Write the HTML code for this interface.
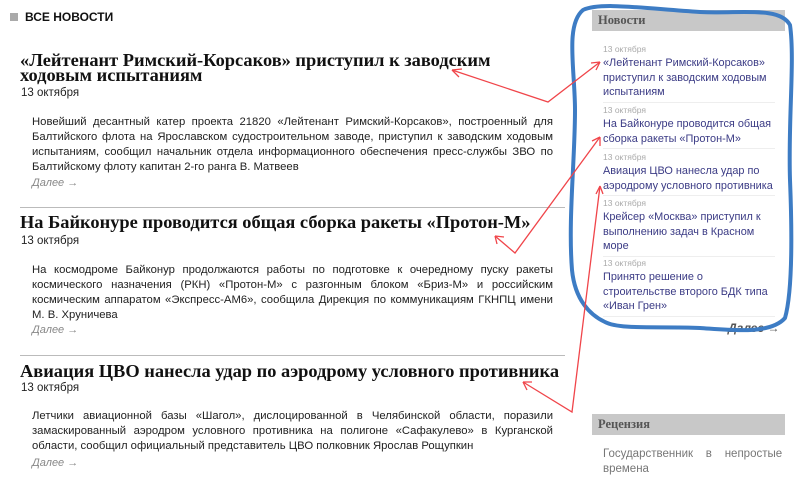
<!DOCTYPE html>
<html><head><meta charset="utf-8"><style>
body{margin:0;width:800px;height:478px;background:#fff;position:relative;overflow:hidden;font-family:"Liberation Sans",Arial,sans-serif}
.a{position:absolute}
.h{font-family:"Liberation Serif",serif;font-weight:bold;font-size:18.4px;line-height:15px;color:#111;left:20px;width:560px;white-space:nowrap}
.d{font-size:11.5px;color:#222;left:21px}
.p{font-size:11.3px;line-height:15px;color:#222;left:32px;width:521px;text-align:justify}
.m{font-size:11px;font-style:italic;color:#888;left:32px}
.hr{height:1px;background:#bbb;left:20px;width:545px}
.sd{font-size:8.5px;color:#aaa;left:603px}
.st{font-size:10.9px;line-height:14.6px;color:#3b3b85;left:603px;width:180px}
.ss{height:1px;background:#eee;left:603px;width:172px}
.bar{left:592px;width:193px;height:21px;background:#c8c8c8;font-family:"Liberation Serif",serif;font-weight:bold;font-size:12.5px;color:#555;line-height:21px;text-indent:6px}
</style></head><body>
<div class="a" style="left:10px;top:13px;width:8px;height:8px;background:#aaa"></div>
<div class="a" style="left:25px;top:10px;font-size:12px;font-weight:bold;color:#111">ВСЕ НОВОСТИ</div>

<div class="a h" style="top:53px">«Лейтенант Римский-Корсаков» приступил к заводским<br>ходовым испытаниям</div>
<div class="a d" style="top:87px">13 октября</div>
<div class="a p" style="top:115px">Новейший десантный катер проекта 21820 «Лейтенант Римский-Корсаков», построенный для Балтийского флота на Ярославском судостроительном заводе, приступил к заводским ходовым испытаниям, сообщил начальник отдела информационного обеспечения пресс-службы ЗВО по Балтийскому флоту капитан 2-го ранга В. Матвеев</div>
<div class="a m" style="top:177px">Далее →</div>
<div class="a hr" style="top:207px"></div>

<div class="a h" style="top:215px">На Байконуре проводится общая сборка ракеты «Протон-М»</div>
<div class="a d" style="top:235px">13 октября</div>
<div class="a p" style="top:263px">На космодроме Байконур продолжаются работы по подготовке к очередному пуску ракеты космического назначения (РКН) «Протон-М» с разгонным блоком «Бриз-М» и российским космическим аппаратом «Экспресс-АМ6», сообщила Дирекция по коммуникациям ГКНПЦ имени М. В. Хруничева</div>
<div class="a m" style="top:324px">Далее →</div>
<div class="a hr" style="top:355px"></div>

<div class="a h" style="top:364px">Авиация ЦВО нанесла удар по аэродрому условного противника</div>
<div class="a d" style="top:382px">13 октября</div>
<div class="a p" style="top:409px">Летчики авиационной базы «Шагол», дислоцированной в Челябинской области, поразили замаскированный аэродром условного противника на полигоне «Сафакулево» в Курганской области, сообщил официальный представитель ЦВО полковник Ярослав Рощупкин</div>
<div class="a m" style="top:457px">Далее →</div>

<div class="a bar" style="top:10px">Новости</div>
<div class="a sd" style="top:44px">13 октября</div>
<div class="a st" style="top:56px">«Лейтенант Римский-Корсаков»<br>приступил к заводским ходовым<br>испытаниям</div>
<div class="a ss" style="top:102px"></div>
<div class="a sd" style="top:105px">13 октября</div>
<div class="a st" style="top:117px">На Байконуре проводится общая<br>сборка ракеты «Протон-М»</div>
<div class="a ss" style="top:148px"></div>
<div class="a sd" style="top:152px">13 октября</div>
<div class="a st" style="top:164px">Авиация ЦВО нанесла удар по<br>аэродрому условного противника</div>
<div class="a ss" style="top:195px"></div>
<div class="a sd" style="top:198px">13 октября</div>
<div class="a st" style="top:210px">Крейсер «Москва» приступил к<br>выполнению задач в Красном<br>море</div>
<div class="a ss" style="top:256px"></div>
<div class="a sd" style="top:258px">13 октября</div>
<div class="a st" style="top:270px">Принято решение о<br>строительстве второго БДК типа<br>«Иван Грен»</div>
<div class="a ss" style="top:316px"></div>
<div class="a" style="left:728px;top:321px;font-size:12px;font-style:italic;font-weight:bold;color:#555">Далее →</div>

<div class="a bar" style="top:414px">Рецензия</div>
<div class="a" style="left:603px;top:447px;width:172px;font-size:11.5px;line-height:15px;color:#777;text-align:justify;text-align-last:left">Государственник&nbsp;&nbsp;&nbsp;&nbsp;в&nbsp;&nbsp;&nbsp;&nbsp;непростые времена</div>

<svg class="a" style="left:0;top:0" width="800" height="478" viewBox="0 0 800 478">
<path d="M583,10 C600,2 640,8 700,12 C740,14 780,6 790,25 C795,60 788,120 790,180 C792,230 793,290 785,318 C770,335 730,330 700,328 C660,326 620,330 605,322 C590,315 575,300 572,270 C568,220 575,160 575,110 C575,70 565,25 583,10 Z" fill="none" stroke="#3d7cc4" stroke-width="4" stroke-linejoin="round"/>
<g stroke="#f0454a" stroke-width="1.3" fill="none">
<path d="M452,70 L548,102 L600,62"/><path d="M452,70 l10,-1 M452,70 l7,7"/><path d="M600,62 l-9,1 M600,62 l-4,8"/>
<path d="M495,236 L515,253 L600,137"/><path d="M495,236 l9,1 M495,236 l2,8"/><path d="M600,137 l-8,4 M600,137 l0,9"/>
<path d="M523,382 L572,412 L600,186"/><path d="M523,382 l9,0 M523,382 l4,8"/><path d="M600,186 l-4,8 M600,186 l3,8"/>
</g>
</svg>
</body></html>
